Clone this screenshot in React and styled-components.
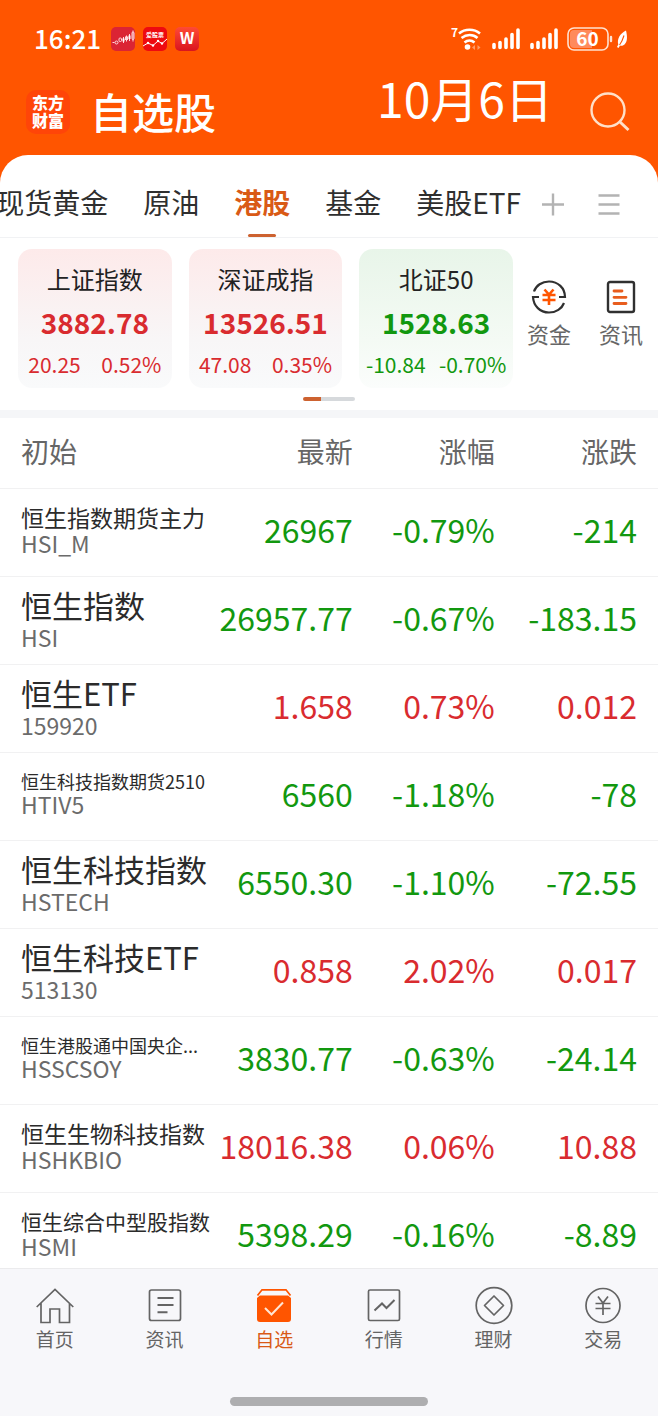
import React from "react";
import styled, { createGlobalStyle } from "styled-components";

const RED = "#d92b2f";
const GREEN = "#12980f";
const BRAND = "#ff5500";
const ACTIVE = "#d95a16";
const toneColor = { up: RED, down: GREEN };

const GlobalStyle = createGlobalStyle`
  *, *::before, *::after { box-sizing: border-box; }
  body {
    margin: 0;
    background: #fff;
    color: #2b2b2b;
    font-family: "Noto Sans CJK SC", "Noto Sans", sans-serif;
  }
  button { margin: 0; padding: 0; border: 0; background: none; font: inherit; color: inherit; cursor: pointer; }
  a { color: inherit; text-decoration: none; }
  h1 { margin: 0; }
  svg { display: block; flex: none; overflow: visible; }
`;

const Screen = styled.div`
  display: flex;
  flex-direction: column;
  height: 100vh;
  overflow: hidden;
  background: ${BRAND};
`;

const StatusBar = styled.div`
  display: flex;
  align-items: center;
  justify-content: space-between;
  height: 55px;
  padding: 23px 30px 0 34px;
  color: #fff;
`;

const StatusGroup = styled.div`
  display: flex;
  align-items: center;
  gap: ${(p) => p.$gap}px;
`;

const Clock = styled.time`
  margin-right: 2px;
  padding-bottom: 2px;
  font-size: 26px;
  line-height: 32px;
  font-weight: 500;
`;

const Header = styled.header`
  display: flex;
  align-items: center;
  height: 100px;
  padding: 14px 27px 0 26px;
  color: #fff;
`;

const Logo = styled.div`
  width: 44px;
  height: 44px;
  padding: 3px 0;
  border-radius: 10px;
  background: #ff4508;
  font-size: 16px;
  line-height: 18px;
  font-weight: 900;
  text-align: center;
`;

const Title = styled.h1`
  flex: 1;
  margin-left: 20px;
  padding-bottom: 2px;
  font-size: 42px;
  line-height: 54px;
  font-weight: 500;
  white-space: nowrap;
`;

const Today = styled.time`
  align-self: flex-start;
  margin-right: 37px;
  font-size: 48px;
  line-height: 56px;
  white-space: nowrap;
`;

const Panel = styled.main`
  display: flex;
  flex-direction: column;
  flex: 1;
  min-height: 0;
  overflow: hidden;
  border-radius: 28px 28px 0 0;
  background: #fff;
`;

const TabRow = styled.div`
  display: flex;
  align-items: center;
  flex: none;
  height: 83px;
  padding: 14px 37px 0 0;
  border-bottom: 1px solid #f1f2f4;
  color: #b3b3b3;
`;

const Tabs = styled.nav`
  display: flex;
  justify-content: flex-end;
  flex: 1;
  gap: 35px;
  min-width: 0;
  margin-right: 21px;
  overflow: hidden;
`;

const Tab = styled.button`
  position: relative;
  flex: none;
  height: 68px;
  padding-bottom: 2px;
  font-size: 28px;
  line-height: 40px;
  font-weight: ${(p) => (p.$active ? 700 : 400)};
  color: ${(p) => (p.$active ? ACTIVE : "#2f2f2f")};
  white-space: nowrap;

  &::after {
    content: "";
    display: ${(p) => (p.$active ? "block" : "none")};
    position: absolute;
    bottom: 0;
    left: calc(50% - 14px);
    width: 28px;
    height: 3px;
    border-radius: 2px;
    background: #cd6230;
  }
`;

const TabActions = styled.div`
  display: flex;
  gap: 31px;
`;

const Summary = styled.section`
  display: flex;
  flex: none;
  align-items: center;
  gap: 14px;
  padding: 11px 15px 0 18px;
`;

const Cards = styled.div`
  display: grid;
  grid-template-columns: repeat(3, 1fr);
  flex: 1;
  gap: 17px;
`;

const Card = styled.article`
  display: flex;
  flex-direction: column;
  gap: 11px;
  padding: 15px 0 10px;
  border-radius: 14px;
  background: ${(p) =>
    p.$tone === "up"
      ? "linear-gradient(#fdeaea, #f8f6f7 65%, #f9fafb)"
      : "linear-gradient(#e8f5e9, #f4faf4 65%, #fbfdfc)"};
  color: ${(p) => toneColor[p.$tone]};
  text-align: center;
`;

const CardName = styled.div`
  font-size: 24px;
  line-height: 30px;
  color: #222;
`;

const CardPrice = styled.div`
  font-size: 28px;
  line-height: 34px;
  font-weight: 700;
`;

const CardChange = styled.div`
  display: flex;
  justify-content: space-around;
  font-size: 21px;
  line-height: 28px;
`;

const Shortcuts = styled.div`
  display: flex;
  gap: 28px;
  padding-bottom: 11px;
`;

const Shortcut = styled.button`
  display: flex;
  flex-direction: column;
  align-items: center;
  gap: 5px;
  font-size: 22px;
  line-height: 28px;
  color: #666;
`;

const Pager = styled.div`
  flex: none;
  width: 52px;
  height: 4px;
  margin: 9px auto;
  border-radius: 2px;
  background: linear-gradient(to right, #cd6230 34%, #d6d9dc 34%);
`;

const ListArea = styled.section`
  flex: 1;
  min-height: 0;
  overflow: auto;
  scrollbar-width: none;
  border-top: 8px solid #f5f6f8;
`;

const Table = styled.table`
  width: 100%;
  table-layout: fixed;
  border-collapse: separate;
  border-spacing: 0;
`;

const HeadCell = styled.th`
  width: ${(p) => p.$width};
  height: 71px;
  padding: 0 ${(p) => (p.$last ? 21 : 0)}px 4px ${(p) => (p.$first ? 21 : 0)}px;
  border-bottom: 1px solid #f1f1f2;
  font-size: 28px;
  line-height: 40px;
  font-weight: 400;
  color: #666;
  text-align: ${(p) => (p.$first ? "left" : "right")};
`;

const NameCell = styled.td`
  height: 88px;
  padding: 0 0 5px 21px;
  border-bottom: 1px solid #f1f1f2;
  white-space: nowrap;
`;

const nameLine = { 31: 38, 23: 26, 21: 24, 18: 20 };

const StockName = styled.div`
  font-size: ${(p) => p.$size}px;
  line-height: ${(p) => nameLine[p.$size]}px;
  color: #2b2b2b;
`;

const StockCode = styled.div`
  font-size: 23px;
  line-height: 26px;
  color: #6b6b6b;
`;

const ValueCell = styled.td`
  padding: 0 ${(p) => (p.$last ? 21 : 0)}px 7px 0;
  border-bottom: 1px solid #f1f1f2;
  font-size: 32px;
  line-height: 40px;
  color: ${(p) => toneColor[p.$tone]};
  text-align: right;
  white-space: nowrap;
`;

const BottomBar = styled.footer`
  flex: none;
  height: 148px;
  padding-top: 18px;
  border-top: 1px solid #ebebed;
  background: #f7f7fa;
`;

const BottomNav = styled.nav`
  display: flex;
`;

const NavItem = styled.a`
  display: flex;
  flex: 1;
  flex-direction: column;
  align-items: center;
  font-size: 19px;
  line-height: 28px;

  && {
    color: ${(p) => (p.$active ? ACTIVE : "#646464")};
  }
`;

const HomeIndicator = styled.div`
  width: 30%;
  height: 9px;
  margin: 44px auto 0;
  border-radius: 5px;
  background: #aeaeb0;
`;

/* Status bar drawings */

const ChartAppIcon = () => (
  <svg width="24" height="24" viewBox="0 0 24 24">
    <rect width="24" height="24" rx="5" fill="#db2434" />
    <g stroke="#ffd9dc" strokeWidth="1" fill="none">
      <path d="M1.500 15.500h2" />
      <circle cx="5.500" cy="15.500" r="1.500" />
      <rect x="8" y="11" width="2.500" height="3.500" rx="1" />
      <path d="M12.500 10v6M15.500 8.500v6M18.500 7v7M22 3.500v11" />
      <rect x="14.500" y="10" width="2" height="2.500" />
      <rect x="21" y="5" width="2" height="7.500" rx="1" />
    </g>
    <path d="M11.500 11.500h2v3h-2zM17.500 8.500h2v3.500h-2z" fill="#fff" />
  </svg>
);

const StockAppIcon = () => (
  <svg width="24" height="24" viewBox="0 0 24 24">
    <rect width="24" height="24" rx="5" fill="#ee0a10" />
    <text x="12" y="10" textAnchor="middle" fontSize="6" fontWeight="700" fill="#fff">
      爱股票
    </text>
    <path d="M0 19l5-3 5 2.500 5-4.500 4 2.500 5-4.500" stroke="#fff" fill="none" />
    <circle cx="5" cy="16" r="1.200" fill="#fff" />
    <circle cx="10" cy="18.500" r="1.200" fill="#fff" />
    <circle cx="15" cy="14" r="1.200" fill="#fff" />
    <circle cx="19" cy="16.500" r="1.200" fill="#fff" />
  </svg>
);

const OfficeAppIcon = () => (
  <svg width="24" height="24" viewBox="0 0 24 24">
    <defs>
      <linearGradient id="office" x1="0" y1="0" x2="0" y2="1">
        <stop offset="0" stopColor="#ff4a35" />
        <stop offset="1" stopColor="#d9141f" />
      </linearGradient>
    </defs>
    <rect width="24" height="24" rx="5" fill="url(#office)" />
    <text x="12" y="17" textAnchor="middle" fontSize="16" fontWeight="700" fill="#fff">
      W
    </text>
  </svg>
);

const WifiIcon = () => (
  <svg width="31" height="26" viewBox="0 0 31 26" fill="none" stroke="#fff" strokeWidth="2.600">
    <text x="0" y="11" fontSize="12" fontWeight="700" fill="#fff" stroke="none">
      7
    </text>
    <path d="M8 7.500c6-5 15-5 21 0M10.500 12c5-4 11.500-4 16 0M13.500 16.500c3-2.500 7-2.500 10 0" />
    <circle cx="16.500" cy="21" r="2.800" fill="#fff" stroke="none" />
    <path d="M21 21.500l3-2.500v5zM29.500 21.500l-3-2.500v5z" fill="#ff9a66" stroke="none" />
  </svg>
);

const SignalIcon = () => (
  <svg width="28" height="22" viewBox="0 0 28 22" stroke="#fff" strokeWidth="3.600" strokeLinecap="round">
    <path d="M2 16.500v3M8 14.500v5M14 11v8.500M20 6.500v13M26 2v17.500" />
  </svg>
);

const BatteryIcon = () => (
  <svg width="60" height="24" viewBox="0 0 60 24">
    <rect x="0" y="1" width="40" height="22" rx="6" stroke="#ffe2d0" strokeWidth="1.600" fill="none" />
    <path d="M6 3h18v18H6a4 4 0 0 1-4-4V7a4 4 0 0 1 4-4z" fill="#ff8a5c" />
    <text x="19.500" y="19" textAnchor="middle" fontSize="19" fontWeight="700" fill="#fff">
      60
    </text>
    <path d="M43 10v4" stroke="#ffe2d0" strokeWidth="2.400" strokeLinecap="round" />
    <path d="M58 3.500c1.500 6.500 1.500 11-1.500 14-1.600 1.500-3.500 1.500-4.500 1l-1.500 2.500-1.500-1 1.300-2.500c-1.500-5.500 1.700-11 7.700-14z" fill="#fff" />
    <path d="M56 8.500c-1.200 4-2.500 7-4.500 9.500" stroke={BRAND} strokeWidth="1.100" fill="none" />
  </svg>
);

const SearchIcon = () => (
  <svg width="41" height="41" viewBox="0 0 41 41" fill="none" stroke="#ffe0c8" strokeWidth="2.400">
    <circle cx="18" cy="18" r="16.500" />
    <path d="M29.500 29.500l9 8.500" strokeWidth="3" />
  </svg>
);

/* Panel drawings */

const PlusIcon = () => (
  <svg width="24" height="24" viewBox="0 0 24 24" stroke="currentColor" strokeWidth="2.400">
    <path d="M0 13.500h22M11 2.500v22" />
  </svg>
);

const MenuIcon = () => (
  <svg width="24" height="24" viewBox="0 0 24 24" stroke="currentColor" strokeWidth="2.400">
    <path d="M1.500 4.500h21M1.500 13.500h21M1.500 22.500h21" />
  </svg>
);

const FundsIcon = () => (
  <svg width="36" height="34" viewBox="0 0 36 34" fill="none" strokeWidth="2.200">
    <g stroke="#303030">
      <path d="M3 11.500C5 5.500 11 1.500 18 1.500c9 0 16 6.500 16 15.500h-6" />
      <path d="M33 23c-2 5.500-8 9.500-15 9.500-9 0-15.500-6.500-16-15.500h6" />
    </g>
    <path d="M13.500 9.500l4.500 5 4.500-5M11.500 15h13M11.500 20h13M18 14v11" stroke={BRAND} strokeWidth="2.600" />
  </svg>
);

const NewsIcon = () => (
  <svg width="30" height="34" viewBox="0 0 30 34" fill="none">
    <rect x="2" y="2" width="26" height="30" rx="2" stroke="#303030" strokeWidth="2.400" />
    <path d="M8 11h8M8 17.300h12M8 23.500h12" stroke="#e85d1e" strokeWidth="2.800" strokeLinecap="round" />
  </svg>
);

/* Bottom navigation drawings */

const NavSvg = ({ children }) => (
  <svg width="38" height="38" viewBox="0 0 38 38" fill="none" stroke="#646464" strokeWidth="1.700">
    {children}
  </svg>
);

const navIcons = {
  home: (
    <NavSvg>
      <path d="M0.700 20L19 2.500 37.300 20M5 16v19.500h9V22h9.500v13.500h10V16" />
    </NavSvg>
  ),
  news: (
    <NavSvg>
      <rect x="3.500" y="3" width="31" height="30.500" rx="2" />
      <path d="M11.500 11h16M11.500 18h16M11.500 25.300h10" strokeWidth="2" />
    </NavSvg>
  ),
  watch: (
    <NavSvg>
      <path d="M2.500 8.500L7 2.800h24l4.500 5.700" stroke={BRAND} />
      <path d="M2 11l3-2.500h28l3 2.500v21a3 3 0 0 1-3 3H5a3 3 0 0 1-3-3z" fill={BRAND} stroke="none" />
      <path d="M10 21l6.500 6.500L28 15.500" stroke="#ffe6d5" strokeWidth="2" />
    </NavSvg>
  ),
  market: (
    <NavSvg>
      <rect x="3.500" y="3" width="31" height="30.500" rx="1.500" />
      <path d="M9.500 23.500l7.500-7 4.500 4.500 8-8" strokeWidth="2" />
    </NavSvg>
  ),
  wealth: (
    <NavSvg>
      <circle cx="19" cy="18.500" r="17.800" />
      <path d="M19 9l9.500 9.500L19 28l-9.500-9.500z" strokeLinejoin="round" />
    </NavSvg>
  ),
  trade: (
    <NavSvg>
      <circle cx="19" cy="18.500" r="17" />
      <path d="M14 9.500l5 6.500 5-6.500M11.500 16.500h15M11.500 21.500h15M19 16v12" />
    </NavSvg>
  ),
};

const tabs = ["现货黄金", "原油", "港股", "基金", "美股ETF"];

const indices = [
  { name: "上证指数", price: "3882.78", change: "20.25", percent: "0.52%", tone: "up" },
  { name: "深证成指", price: "13526.51", change: "47.08", percent: "0.35%", tone: "up" },
  { name: "北证50", price: "1528.63", change: "-10.84", percent: "-0.70%", tone: "down" },
];

const stocks = [
  { name: "恒生指数期货主力", size: 23, code: "HSI_M", price: "26967", percent: "-0.79%", change: "-214", tone: "down" },
  { name: "恒生指数", size: 31, code: "HSI", price: "26957.77", percent: "-0.67%", change: "-183.15", tone: "down" },
  { name: "恒生ETF", size: 31, code: "159920", price: "1.658", percent: "0.73%", change: "0.012", tone: "up" },
  { name: "恒生科技指数期货2510", size: 18, code: "HTIV5", price: "6560", percent: "-1.18%", change: "-78", tone: "down" },
  { name: "恒生科技指数", size: 31, code: "HSTECH", price: "6550.30", percent: "-1.10%", change: "-72.55", tone: "down" },
  { name: "恒生科技ETF", size: 31, code: "513130", price: "0.858", percent: "2.02%", change: "0.017", tone: "up" },
  { name: "恒生港股通中国央企...", size: 18, code: "HSSCSOY", price: "3830.77", percent: "-0.63%", change: "-24.14", tone: "down" },
  { name: "恒生生物科技指数", size: 23, code: "HSHKBIO", price: "18016.38", percent: "0.06%", change: "10.88", tone: "up" },
  { name: "恒生综合中型股指数", size: 21, code: "HSMI", price: "5398.29", percent: "-0.16%", change: "-8.89", tone: "down" },
];

const navItems = [
  { id: "home", label: "首页" },
  { id: "news", label: "资讯" },
  { id: "watch", label: "自选" },
  { id: "market", label: "行情" },
  { id: "wealth", label: "理财" },
  { id: "trade", label: "交易" },
];

export default function App() {
  return (
    <Screen>
      <GlobalStyle />
      <StatusBar>
        <StatusGroup $gap={8}>
          <Clock>16:21</Clock>
          <ChartAppIcon />
          <StockAppIcon />
          <OfficeAppIcon />
        </StatusGroup>
        <StatusGroup $gap={10}>
          <WifiIcon />
          <SignalIcon />
          <SignalIcon />
          <BatteryIcon />
        </StatusGroup>
      </StatusBar>

      <Header>
        <Logo>
          东方
          <br />
          财富
        </Logo>
        <Title>自选股</Title>
        <Today>10月6日</Today>
        <button type="button" aria-label="搜索">
          <SearchIcon />
        </button>
      </Header>

      <Panel>
        <TabRow>
          <Tabs>
            {tabs.map((tab) => (
              <Tab key={tab} type="button" $active={tab === "港股"}>
                {tab}
              </Tab>
            ))}
          </Tabs>
          <TabActions>
            <button type="button" aria-label="添加">
              <PlusIcon />
            </button>
            <button type="button" aria-label="菜单">
              <MenuIcon />
            </button>
          </TabActions>
        </TabRow>

        <Summary>
          <Cards>
            {indices.map((item) => (
              <Card key={item.name} $tone={item.tone}>
                <CardName>{item.name}</CardName>
                <CardPrice>{item.price}</CardPrice>
                <CardChange>
                  <span>{item.change}</span>
                  <span>{item.percent}</span>
                </CardChange>
              </Card>
            ))}
          </Cards>
          <Shortcuts>
            <Shortcut type="button">
              <FundsIcon />
              资金
            </Shortcut>
            <Shortcut type="button">
              <NewsIcon />
              资讯
            </Shortcut>
          </Shortcuts>
        </Summary>
        <Pager />

        <ListArea>
          <Table>
            <thead>
              <tr>
                <HeadCell scope="col" $first>初始</HeadCell>
                <HeadCell scope="col" $width="21.6%">最新</HeadCell>
                <HeadCell scope="col" $width="21.6%">涨幅</HeadCell>
                <HeadCell scope="col" $width="24.8%" $last>涨跌</HeadCell>
              </tr>
            </thead>
            <tbody>
              {stocks.map((stock) => (
                <tr key={stock.code}>
                  <NameCell>
                    <StockName $size={stock.size}>{stock.name}</StockName>
                    <StockCode>{stock.code}</StockCode>
                  </NameCell>
                  <ValueCell $tone={stock.tone}>{stock.price}</ValueCell>
                  <ValueCell $tone={stock.tone}>{stock.percent}</ValueCell>
                  <ValueCell $tone={stock.tone} $last>{stock.change}</ValueCell>
                </tr>
              ))}
            </tbody>
          </Table>
        </ListArea>
      </Panel>

      <BottomBar>
        <BottomNav>
          {navItems.map((item) => (
            <NavItem key={item.id} href={`#${item.id}`} $active={item.id === "watch"}>
              {navIcons[item.id]}
              {item.label}
            </NavItem>
          ))}
        </BottomNav>
        <HomeIndicator />
      </BottomBar>
    </Screen>
  );
}
